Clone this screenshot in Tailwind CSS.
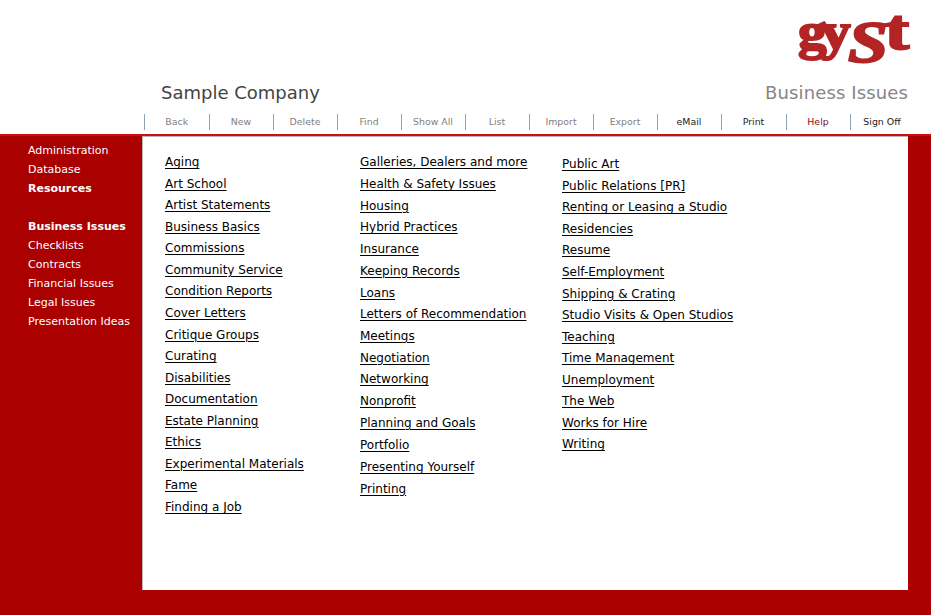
<!DOCTYPE html>
<html lang="en">
<head>
  <meta charset="UTF-8" />
  <title>gyst - Business Issues</title>
  <script src="https://cdn.jsdelivr.net/npm/@tailwindcss/browser@4"></script>
</head>
<body class="bg-[#aa0000] font-['DejaVu_Sans','Liberation_Sans',sans-serif] h-[615px] w-[931px] overflow-hidden flex flex-col">

  <!-- Header -->
  <header class="bg-white h-[136px] shrink-0 flex flex-col border-b-2 border-[#cc1111]">
    <div class="h-[78px] flex justify-end pr-[20px]">
      <!-- logo -->
      <svg width="114" height="78" viewBox="0 0 114 78" class="block">
        <g fill="#b32425" stroke="#b32425" stroke-width="2" font-family="'Liberation Serif', serif" font-weight="700" font-size="52">
          <text transform="translate(1 49) scale(1.1 1)">g</text>
          <text transform="translate(24 49) scale(1.14 1)">y</text>
          <text transform="translate(88 49) scale(1.3 1)" font-size="56">t</text>
          <text transform="translate(51 62) scale(1.2 1)" font-style="italic" font-size="60">S</text>
        </g>
      </svg>
    </div>
    <div class="flex justify-between items-baseline pt-[1px] pl-[161px] pr-[23px] h-[36px]">
      <span class="text-[18px] text-[#444444]">Sample Company</span>
      <span class="text-[18px] tracking-[0.13px] text-[#8a8585]">Business Issues</span>
    </div>
    <nav class="flex pl-[144px] h-[16px] text-[9.4px] leading-[16px]">
      <a class="w-[64.5px] text-center border-l border-[#8aa3b8] text-[#808080]">Back</a>
      <a class="w-[64px] text-center border-l border-[#8aa3b8] text-[#808080]">New</a>
      <a class="w-[64px] text-center border-l border-[#8aa3b8] text-[#808080]">Delete</a>
      <a class="w-[64px] text-center border-l border-[#8aa3b8] text-[#808080]">Find</a>
      <a class="w-[64px] text-center border-l border-[#8aa3b8] text-[#808080]">Show All</a>
      <a class="w-[64px] text-center border-l border-[#8aa3b8] text-[#808080]">List</a>
      <a class="w-[64px] text-center border-l border-[#8aa3b8] text-[#808080]">Import</a>
      <a class="w-[64px] text-center border-l border-[#8aa3b8] text-[#808080]">Export</a>
      <a class="w-[64px] text-center border-l border-[#8aa3b8] text-[#222222]">eMail</a>
      <a class="w-[65px] text-center border-l border-[#8aa3b8] text-[#222222]">Print</a>
      <a class="w-[64px] text-center border-l border-[#8aa3b8] text-[#7a1515]">Help</a>
      <a class="w-[64px] text-center border-l border-[#8aa3b8] text-[#222222]">Sign Off</a>
    </nav>
  </header>

  <div class="flex h-[454px] shrink-0">
    <!-- Sidebar -->
    <aside class="w-[142px] shrink-0 pl-[28px] pt-[5px] text-white text-[11px] leading-[19px]">
      <a class="block">Administration</a>
      <a class="block">Database</a>
      <a class="block font-bold">Resources</a>
      <a class="block font-bold mt-[19px]">Business Issues</a>
      <a class="block">Checklists</a>
      <a class="block">Contracts</a>
      <a class="block">Financial Issues</a>
      <a class="block">Legal Issues</a>
      <a class="block">Presentation Ideas</a>
    </aside>

    <!-- Main list -->
    <main class="w-[766px] bg-white border-l border-t border-[#b5b5b5] flex text-[12px] text-black underline underline-offset-2">
      <div class="w-[195px] ml-[22px] pt-[15px] leading-[21.56px] shrink-0">
        <a class="block">Aging</a>
        <a class="block">Art School</a>
        <a class="block">Artist Statements</a>
        <a class="block">Business Basics</a>
        <a class="block">Commissions</a>
        <a class="block">Community Service</a>
        <a class="block">Condition Reports</a>
        <a class="block">Cover Letters</a>
        <a class="block">Critique Groups</a>
        <a class="block">Curating</a>
        <a class="block">Disabilities</a>
        <a class="block">Documentation</a>
        <a class="block">Estate Planning</a>
        <a class="block">Ethics</a>
        <a class="block">Experimental Materials</a>
        <a class="block">Fame</a>
        <a class="block">Finding a Job</a>
      </div>
      <div class="w-[202px] pt-[15.3px] leading-[21.7px] shrink-0">
        <a class="block">Galleries, Dealers and more</a>
        <a class="block">Health &amp; Safety Issues</a>
        <a class="block">Housing</a>
        <a class="block">Hybrid Practices</a>
        <a class="block">Insurance</a>
        <a class="block">Keeping Records</a>
        <a class="block">Loans</a>
        <a class="block">Letters of Recommendation</a>
        <a class="block">Meetings</a>
        <a class="block">Negotiation</a>
        <a class="block">Networking</a>
        <a class="block">Nonprofit</a>
        <a class="block">Planning and Goals</a>
        <a class="block mt-[1px]">Portfolio</a>
        <a class="block">Presenting Yourself</a>
        <a class="block">Printing</a>
      </div>
      <div class="pt-[17.3px] leading-[21.55px]">
        <a class="block">Public Art</a>
        <a class="block">Public Relations [PR]</a>
        <a class="block">Renting or Leasing a Studio</a>
        <a class="block">Residencies</a>
        <a class="block">Resume</a>
        <a class="block">Self-Employment</a>
        <a class="block">Shipping &amp; Crating</a>
        <a class="block">Studio Visits &amp; Open Studios</a>
        <a class="block">Teaching</a>
        <a class="block">Time Management</a>
        <a class="block">Unemployment</a>
        <a class="block">The Web</a>
        <a class="block">Works for Hire</a>
        <a class="block">Writing</a>
      </div>
    </main>
  </div>
</body>
</html>
